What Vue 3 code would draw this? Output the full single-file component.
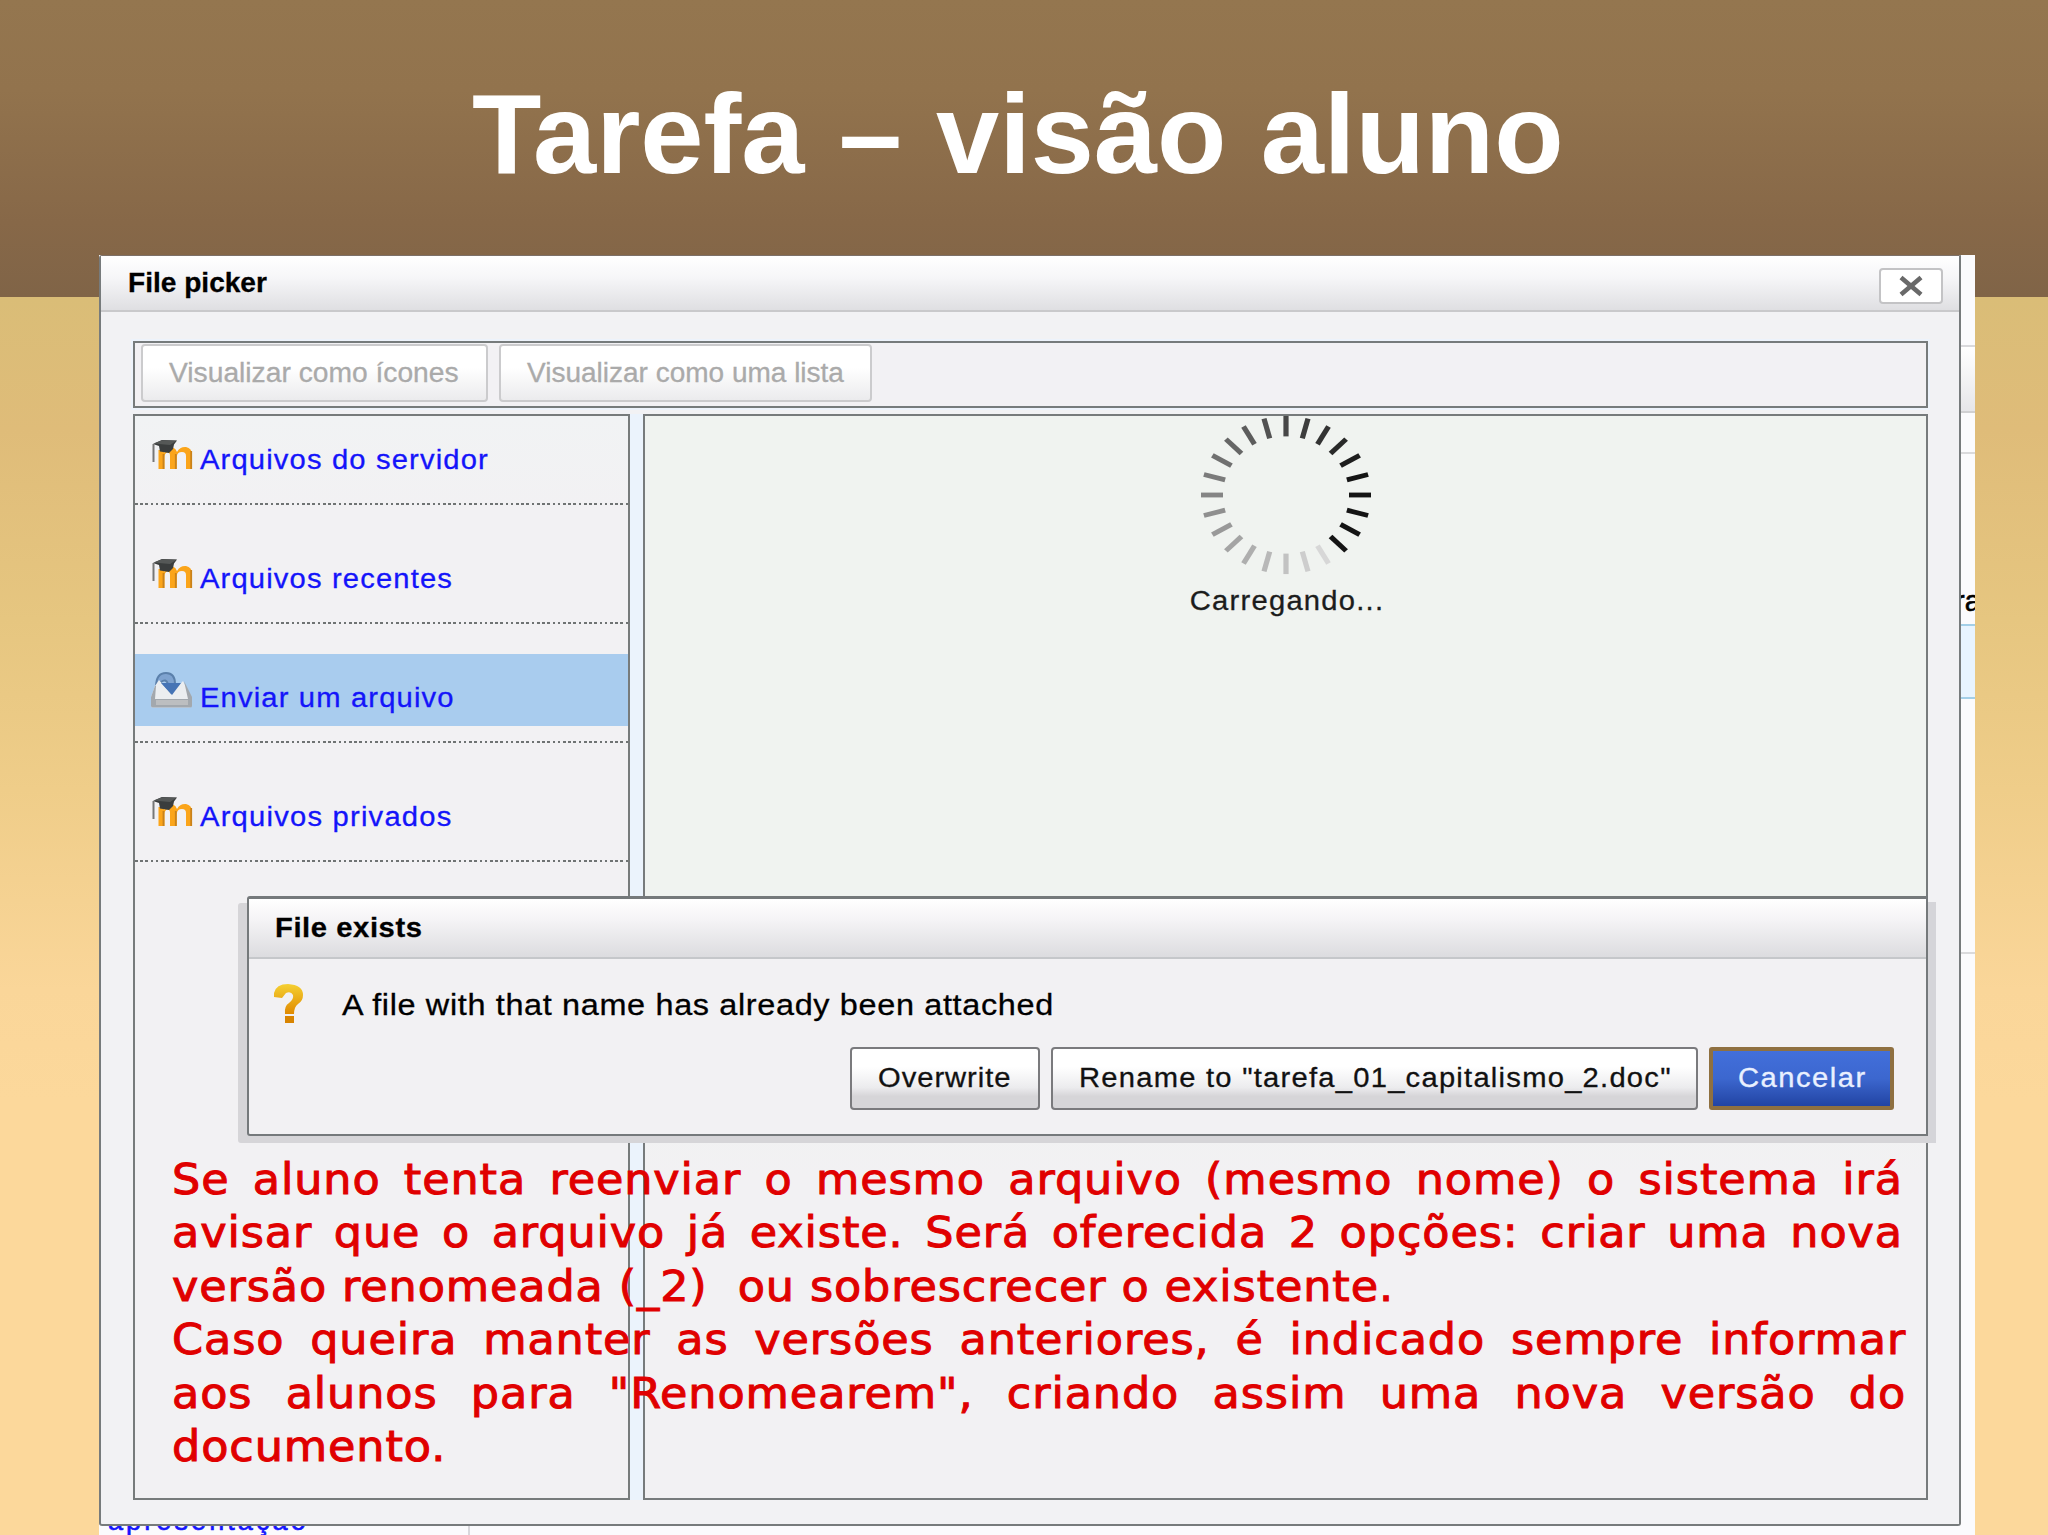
<script setup>
const repositories = [
  { name: 'Arquivos do servidor', icon: 'moodle', spacing: 'sp-a' },
  { name: 'Arquivos recentes', icon: 'moodle', spacing: 'sp-a' },
  { name: 'Enviar um arquivo', icon: 'upload', spacing: 'sp-a', active: true },
  { name: 'Arquivos privados', icon: 'moodle', spacing: 'sp-b' },
]

const ticks = Array.from({ length: 24 }, (_, i) => {
  const angle = i * 15
  const age = (135 - angle + 360) % 360
  const level = age < 60 ? 20 : Math.round(20 + ((age - 60) / 285) * 195)
  return { angle, color: `rgb(${level},${level},${level})` }
})

const noteLines = [
  { text: 'Se aluno tenta reenviar o mesmo arquivo (mesmo nome) o sistema irá', fill: true },
  { text: 'avisar que o arquivo já existe. Será oferecida 2 opções: criar uma nova', fill: true },
  { text: 'versão renomeada (_2)  ou sobrescrecer o existente.', tight: true },
  { text: 'Caso queira manter as versões anteriores, é indicado sempre informar', fill: true, wide: true },
  { text: 'aos alunos para "Renomearem", criando assim uma nova versão do', fill: true, wide: true },
  { text: 'documento.' },
]
</script>

<template>
  <div class="slide">
    <header class="slide-head">
      <h1>Tarefa – visão aluno</h1>
    </header>

    <main class="capture">
      <div class="page-edge">
        <div class="edge-bar"></div>
        <div class="edge-rule"></div>
        <div class="edge-text">ra</div>
        <div class="edge-band"></div>
        <div class="edge-rule last"></div>
      </div>
      <div class="page-foot"><span class="foot-link">apresentação</span></div>

      <section class="picker">
        <div class="titlebar">
          <span class="fit t-picker">File picker</span>
          <button class="close" aria-label="Close">
            <svg width="26" height="24" viewBox="0 0 26 24">
              <path d="M3 3.500L23 20.500M23 3.500L3 20.500" stroke="#696969" stroke-width="4.600" />
            </svg>
          </button>
        </div>

        <div class="picker-body">
          <div class="toolbar">
            <button class="view-btn b-icons"><span class="fit t-icons">Visualizar como ícones</span></button>
            <button class="view-btn b-list"><span class="fit t-list">Visualizar como uma lista</span></button>
          </div>

          <div class="columns">
            <ul class="repos">
              <li v-for="r in repositories" :key="r.name">
                <a :class="{ active: r.active }">
                  <svg v-if="r.icon === 'moodle'" class="repo-icon" width="46" height="36" viewBox="0 0 46 36">
                    <path
                      d="M11.500 35V16H17.500V19Q21 12.500 26 13.500Q29 14.500 30 18Q33 12.500 39 13Q45 14 45 21V35H39V22Q39 18 35 18Q30 18 29.800 23V35H23V22Q23 18 20.500 18.500Q17.500 19 17.500 23V35Z"
                      fill="#fba51a"
                    />
                    <path d="M16.500 20V35M28.800 20V35M44.200 17V35" stroke="#c9821a" stroke-width="1.800" />
                    <path d="M6 10L15 6L30 6.500L27 10.500L26 15L22 19L13 17.500L12 12Z" fill="#3a3d3d" />
                    <path d="M6.500 9.500L15 6.300L29.500 6.800L23 11Z" fill="#555857" />
                    <path d="M6.500 10V28" stroke="#777" stroke-width="2" />
                  </svg>
                  <svg v-else class="repo-icon" width="46" height="36" viewBox="0 0 46 36">
                    <path d="M9 15Q9 1 19 1Q28 1 28 12L33 14L25 24L16 14L21 12Q19 6 14 10Q12 12 12 16Z" fill="#7fa3d0" stroke="#5b80ab" stroke-width="2" />
                    <path d="M8 14L12 8L24 22L36 9L43 23L44 34Q44 35.500 42 35.500H6Q4 35.500 4 34V25Z" fill="#eceef0" />
                    <path d="M14 11L34 11L25 23Z" fill="#4674b5" />
                    <path d="M8 14L4 25V34Q4 35.500 6 35.500H43Q45 35.500 45 34V25L37 9L41 27H8L9 14Z" fill="#a3a8ad" />
                    <path d="M9 28H41V33H9Z" fill="#bcbec0" />
                  </svg>
                  <span class="fit" :class="r.spacing">{{ r.name }}</span>
                </a>
              </li>
            </ul>

            <div class="content">
              <svg class="spinner" width="172" height="160" viewBox="-86 -86 172 172" preserveAspectRatio="none">
                <line
                  v-for="t in ticks"
                  :key="t.angle"
                  x1="0"
                  y1="-63"
                  x2="0"
                  y2="-85"
                  :stroke="t.color"
                  stroke-width="5.200"
                  :transform="`rotate(${t.angle})`"
                />
              </svg>
              <span class="fit t-loading">Carregando...</span>
            </div>
          </div>
        </div>
      </section>

      <section class="dialog">
        <div class="dialog-head"><span class="fit t-exists">File exists</span></div>
        <div class="dialog-msg">
          <svg width="32" height="42" viewBox="0 0 32 42">
            <defs>
              <linearGradient id="gold" x1="0" x2="0" y1="0" y2="1">
                <stop offset="0" stop-color="#f5d032" />
                <stop offset="1" stop-color="#e08a00" />
              </linearGradient>
            </defs>
            <path d="M1 9Q3 0 15 0Q30 1 30 11Q30 17 25 20Q21 23 21 30H12Q11 22 16 19Q21 15 20 11Q18 7 13 9L9 14L1 13Z" fill="url(#gold)" />
            <path d="M12 32H21V39H12Z" fill="#d88400" />
          </svg>
          <span class="fit t-msg">A file with that name has already been attached</span>
        </div>
        <div class="dialog-actions">
          <button class="act b-over"><span class="fit t-over">Overwrite</span></button>
          <button class="act b-rename"><span class="fit t-rename">Rename to "tarefa_01_capitalismo_2.doc"</span></button>
          <button class="act primary"><span class="fit t-cancel">Cancelar</span></button>
        </div>
      </section>

      <div class="note">
        <p v-for="l in noteLines" :key="l.text" :class="{ fill: l.fill, wide: l.wide, tight: l.tight }">{{ l.text }}</p>
      </div>
    </main>
  </div>
</template>

<style>
html,
body {
  margin: 0;
  overflow: hidden;
}
</style>

<style scoped>
* {
  box-sizing: border-box;
}
.slide {
  width: 2048px;
  height: 1535px;
  overflow: hidden;
  font-family: 'Liberation Sans', Arial, sans-serif;
  background:
    linear-gradient(#94764f, #92734d 30%, #876848 75%, #806447) 0 0 / 100% 297px no-repeat,
    linear-gradient(#dabd77 297px, #dfbc79 430px, #e6c680 620px, #efcd89 790px, #fad699 990px, #fcd89b 1100px);
}
.slide-head {
  height: 255px;
}
h1 {
  margin: 0;
  padding-left: 472px;
  padding-top: 74px;
  line-height: 120px;
  font-size: 113.600px;
  font-weight: bold;
  word-spacing: 2.600px;
  color: #fff;
  white-space: nowrap;
}
.capture {
  position: relative;
  width: 1876px;
  height: 1280px;
  margin-left: 99px;
  overflow: hidden;
  background: #fbfbfd;
}
.fit {
  display: inline-block;
  transform-origin: 0 50%;
  transform: scaleX(1.08);
  white-space: nowrap;
  font-size: 27px;
  -webkit-text-stroke: 0.300px currentColor;
}

/* parts of the page visible around the window */
.page-edge {
  position: absolute;
  right: 0;
  top: 0;
  width: 14px;
  height: 100%;
  padding-top: 90px;
}
.edge-bar {
  height: 68px;
  border-top: 2px solid #d9d9dc;
  border-bottom: 2px solid #d0d0d2;
  background: linear-gradient(#fff, #e6e6e9);
}
.edge-rule {
  height: 2px;
  margin-top: 39px;
  background: #dadadc;
}
.edge-text {
  height: 170px;
  padding-top: 130px;
  margin-left: -6px;
  font-size: 29px;
  line-height: 34px;
  white-space: nowrap;
  -webkit-text-stroke: 0.600px #000;
}
.edge-band {
  height: 75px;
  border-top: 2px solid #a3cfe8;
  border-bottom: 2px solid #a3cfe8;
  background: #e8f4ff;
}
.edge-rule.last {
  margin-top: 253px;
}
.page-foot {
  position: absolute;
  left: 0;
  bottom: 0;
  width: 371px;
  height: 40px;
  border-right: 2px solid #d8d8dc;
}
.foot-link {
  display: block;
  padding: 8px 0 0 9px;
  font-size: 27px;
  line-height: 36px;
  letter-spacing: 3.100px;
  color: #1414ff;
  -webkit-text-stroke: 0.600px currentColor;
}

.picker {
  position: relative;
  width: 1862px;
  height: 1271px;
  border: 2px solid #777b7c;
  border-top: 1px solid #7d7068;
  border-radius: 3px 0 3px 3px;
  background: #f2f2f4;
}
.titlebar {
  display: flex;
  align-items: center;
  justify-content: space-between;
  height: 56px;
  padding: 0 16px 0 27px;
  border-bottom: 2px solid #c9c9cb;
  background: linear-gradient(#fff, #f6f6f8 40%, #dfdfe2);
}
.titlebar .fit {
  font-weight: bold;
}
button {
  font-family: inherit;
  padding: 0;
  margin: 0;
}
.close {
  display: flex;
  align-items: center;
  justify-content: center;
  width: 64px;
  height: 36px;
  margin-top: 5px;
  border: 2px solid #c3c3c5;
  border-radius: 4px;
  background: #fff;
}
.picker-body {
  padding: 29px 31px 0 32px;
}
.toolbar {
  display: flex;
  gap: 11px;
  width: 1795px;
  height: 67px;
  padding: 1px 0 0 6px;
  border: 2px solid #767b7c;
  outline: 2px solid #edf3fb;
  background: #f2f1f4;
}
.view-btn {
  height: 58px;
  text-align: left;
  border: 2px solid #cbcbcd;
  border-radius: 4px;
  background: linear-gradient(#fff 40%, #ebebed);
  color: #aaa;
}
.b-icons {
  width: 347px;
  padding-left: 26px;
}
.b-list {
  width: 373px;
  padding-left: 26px;
}
.columns {
  display: flex;
  width: 1795px;
  height: 1086px;
  margin-top: 6px;
  background: #ebf3fc;
}
.repos {
  list-style: none;
  margin: 0 13px 0 0;
  padding: 0;
  width: 497px;
  border: 2px solid #777b7b;
  background: linear-gradient(#f1f3f4, #f2f1f3 90px);
}
.repos li {
  padding-bottom: 17px;
  background: repeating-linear-gradient(90deg, #6f7373 0 2.600px, transparent 2.600px 5.220px) 0 100% / 100% 2px no-repeat;
}
.repos li + li {
  padding-top: 30px;
}
.repos a {
  display: flex;
  align-items: flex-end;
  height: 72px;
  padding: 0 0 18px 12px;
  color: #1414fa;
}
.repos a.active {
  background: #a9ccee;
}
.repos .fit {
  line-height: 21px;
  margin: 0 0 -1px 7px;
}
.content {
  flex: 1;
  display: flex;
  flex-direction: column;
  align-items: center;
  border: 2px solid #777b7c;
  background: linear-gradient(#f0f3f0 600px, #f2f1f3 760px);
}
.spinner {
  margin-top: -1px;
}
.content .fit {
  transform-origin: 50% 50%;
  line-height: 32px;
  margin-top: 10px;
  margin-left: 3px;
  color: #1c1c1c;
}

.dialog {
  position: absolute;
  left: 148px;
  top: 641px;
  width: 1681px;
  height: 240px;
  border: 2px solid #75797b;
  border-top-width: 3px;
  border-radius: 3px 0 0 3px;
  background: #f2f1f3;
  box-shadow: -9px 7px 0 0 #d6d5d8;
}
.dialog::after {
  content: '';
  position: absolute;
  right: -10px;
  top: 3px;
  width: 8px;
  height: 241px;
  background: #d5d5d9;
}
.dialog::before {
  content: '';
  position: absolute;
  right: -2px;
  bottom: -9px;
  width: 12px;
  height: 7px;
  background: #d6d5d8;
}
.dialog-head {
  display: flex;
  align-items: center;
  height: 60px;
  padding-left: 26px;
  border-bottom: 2px solid #c5c7ca;
  background: linear-gradient(#fff, #f5f4f6 35%, #dcdcdf);
}
.dialog-head .fit {
  font-weight: bold;
}
.dialog-msg {
  display: flex;
  align-items: center;
  height: 88px;
  padding: 3px 0 0 24px;
}
.dialog-msg .fit {
  margin-left: 37px;
  font-size: 30px;
}
.dialog-actions {
  display: flex;
  gap: 11px;
  padding-left: 601px;
}
.act {
  height: 63px;
  text-align: left;
  border: 2px solid #7a7a7d;
  border-radius: 4px;
  background: linear-gradient(#fff 30%, #ececee 65%, #d6d5d8 80%);
  color: #111;
}
.b-over {
  width: 190px;
  padding-left: 26px;
}
.b-rename {
  width: 647px;
  padding-left: 26px;
}
.act.primary {
  width: 185px;
  padding-left: 25px;
  border: 4px solid #8f7040;
  border-radius: 3px;
  background: linear-gradient(#426fdb, #3c67cf 50%, #2244a3);
  color: #e9f0ff;
}

.t-picker {
  transform: scaleX(1.04);
}
.t-icons {
  transform: scaleX(1.045);
}
.t-list {
  transform: scaleX(1.037);
}
.sp-a {
  letter-spacing: 1.070px;
}
.sp-b {
  letter-spacing: 1.130px;
}
.t-loading {
  letter-spacing: 1.150px;
}
.t-exists {
  letter-spacing: 0.550px;
}
.t-msg {
  letter-spacing: 0.610px;
}
.t-over {
  letter-spacing: 0.900px;
}
.t-rename {
  letter-spacing: 1.150px;
}
.t-cancel {
  letter-spacing: 1.400px;
}

.note {
  position: absolute;
  left: 73px;
  top: 898px;
  width: 1633px;
  transform: scaleX(1.06);
  transform-origin: 0 0;
  font-family: 'DejaVu Sans', sans-serif;
  font-size: 42px;
  line-height: 53.400px;
  letter-spacing: 0.850px;
  color: #e00000;
  -webkit-text-stroke: 1px #e00000;
}
.note p {
  margin: 0;
  white-space: pre;
}
.note .fill {
  white-space: normal;
  text-align-last: justify;
}
.note .wide {
  width: 1636px;
}
.note .tight {
  letter-spacing: 0.830px;
}
</style>
